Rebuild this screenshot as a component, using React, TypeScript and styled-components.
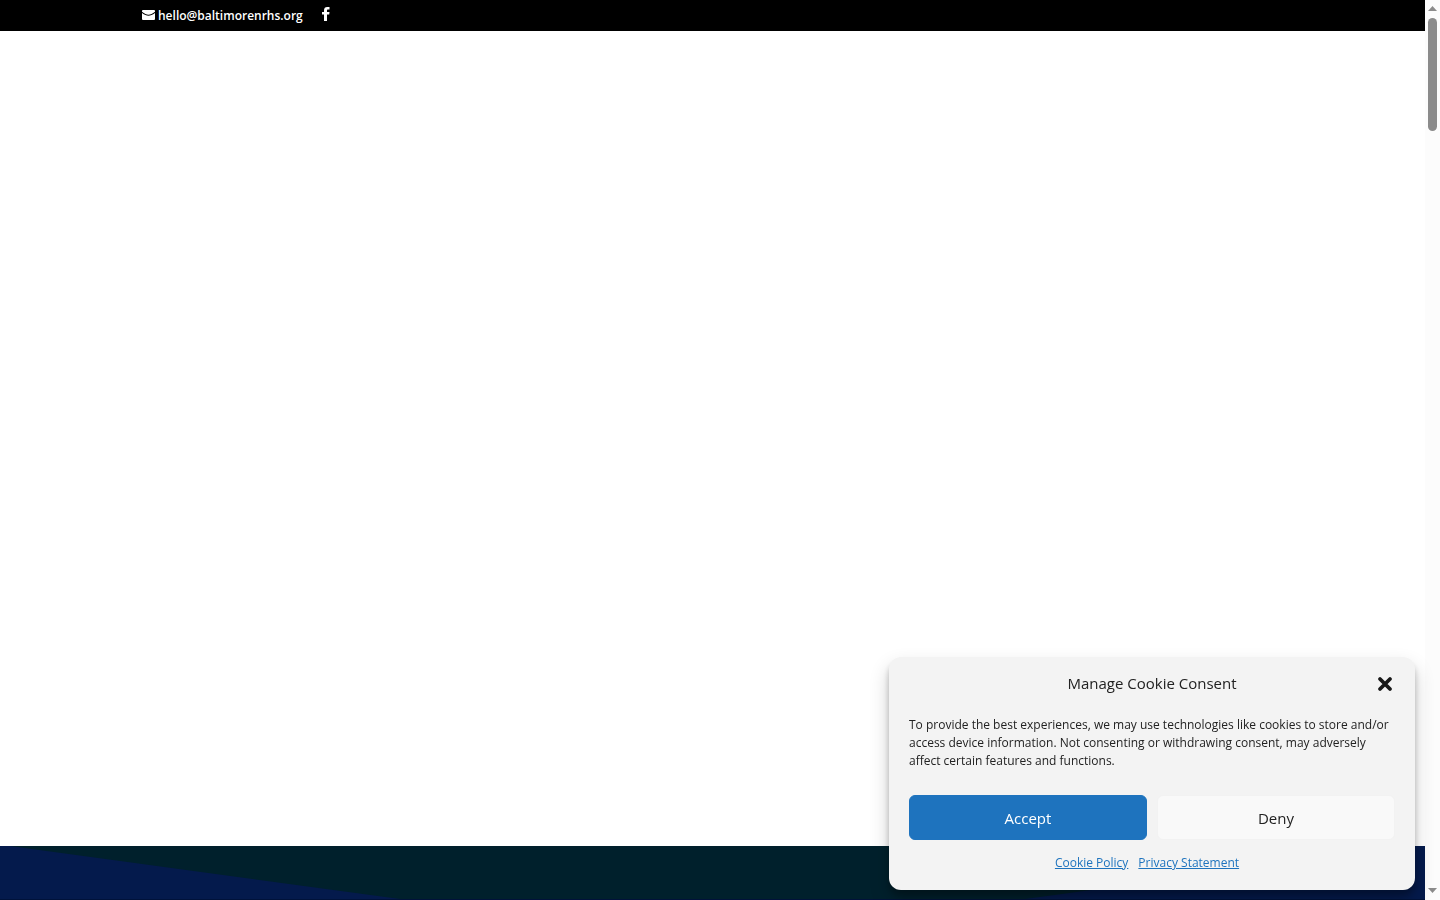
import React, { useState } from "react";
import styled, { createGlobalStyle } from "styled-components";

const GlobalStyle = createGlobalStyle`
  *, *::before, *::after { box-sizing: border-box; }
  body {
    margin: 0;
    background: #fff;
    color: #222;
    font-family: "Open Sans", Arial, sans-serif;
    font-size: 12px;
  }
`;

const Page = styled.div`
  display: grid;
  grid-template-columns: minmax(0, 1fr) 15px;
  height: 100vh;
  overflow: hidden;
`;

const Content = styled.div`
  display: flex;
  flex-direction: column;
  min-width: 0;
`;

const TopBar = styled.header`
  display: flex;
  align-items: flex-start;
  gap: 19px;
  padding: 7px 142px 6px;
  background: #000;
`;

const TopLink = styled.a`
  display: flex;
  align-items: flex-start;
  gap: 3px;
  color: #fff;
  font-weight: 600;
  line-height: 18px;
  text-decoration: none;

  svg { display: block; fill: currentColor; }
`;

const MailIcon = styled.svg`
  margin-top: 3px;
`;

const Hero = styled.main`
  flex: 1;
  background: #fff;
`;

const Band = styled.section`
  height: 54px;
  background: #00202c;
  border-bottom: 1px solid #00123a;

  svg { display: block; width: 100%; height: 100%; }
`;

const ScrollTrack = styled.div`
  display: flex;
  flex-direction: column;
  align-items: center;
  padding: 6px 0 7px;
  background: #fcfcfc;
`;

const ScrollArrow = styled.svg`
  display: block;
  width: 9px;
  height: 5px;
  fill: #8b8b8b;
`;

const ScrollThumb = styled.div`
  width: 9px;
  height: 113px;
  margin: 7px 0 auto;
  border-radius: 5px;
  background: #8b8b8b;
`;

const Dialog = styled.section`
  position: fixed;
  right: 25px;
  bottom: 10px;
  width: 526px;
  padding: 16px 20px;
  border-radius: 12px;
  background: #f3f3f3;
  box-shadow: rgba(0, 0, 0, 0.19) 0 10px 20px, rgba(0, 0, 0, 0.23) 0 6px 6px;
`;

const DialogHeader = styled.div`
  display: grid;
  grid-template-columns: 20px 1fr 20px;
  align-items: center;
`;

const Title = styled.h2`
  grid-column: 2;
  margin: 0;
  font-size: 15px;
  font-weight: 400;
  line-height: 20px;
  text-align: center;
`;

const CloseButton = styled.button`
  display: flex;
  justify-content: center;
  padding: 3px 0 1px;
  border: 0;
  background: none;
  color: #181818;
  cursor: pointer;
`;

const Message = styled.p`
  margin: 23px 0 25px;
  line-height: 18px;
`;

const Actions = styled.div`
  display: flex;
  gap: 10px;
`;

const ActionButton = styled.button<{ $primary?: boolean }>`
  flex: 1;
  height: 45px;
  padding: 0;
  border: 1px solid ${(p) => (p.$primary ? "#1e73be" : "#f2f2f2")};
  border-radius: 6px;
  background: ${(p) => (p.$primary ? "#1e73be" : "#f9f9f9")};
  color: ${(p) => (p.$primary ? "#fff" : "#222")};
  font: 400 15px/20px "Open Sans", Arial, sans-serif;
  cursor: pointer;
`;

const Links = styled.nav`
  display: flex;
  justify-content: center;
  gap: 10px;
  padding: 14px 10px 2px 0;
`;

const PolicyLink = styled.a`
  color: #1e73be;
  line-height: 18px;
  text-decoration: underline;
`;

export default function App() {
  const [open, setOpen] = useState(true);
  const close = () => setOpen(false);

  return (
    <>
      <GlobalStyle />
      <Page>
        <Content>
          <TopBar>
            <TopLink href="mailto:hello@baltimorenrhs.org">
              <MailIcon width="13" height="10" viewBox="0 0 13 10" aria-hidden="true">
                <path d="M1 0h11a1 1 0 0 1 1 1v.8C10.5 3.6 8.5 4.7 6.5 4.7S2.5 3.6 0 1.8V1a1 1 0 0 1 1-1zM0 3c2.5 1.8 4.5 2.8 6.500 2.800S10.500 4.800 13 3v6a1 1 0 0 1-1 1H1a1 1 0 0 1-1-1z" />
              </MailIcon>
              hello@baltimorenrhs.org
            </TopLink>
            <TopLink href="#facebook" aria-label="Facebook">
              <svg width="8" height="14" viewBox="0 0 8 14" aria-hidden="true">
                <path d="M2 14V7.5H0V5h2V3.400C2 1.200 3.200 0 5.200 0H7.500v2.600H6c-.8 0-1 .3-1 .9V5h2.500l-.3 2.500H5V14z" />
              </svg>
            </TopLink>
          </TopBar>
          <Hero />
          <Band>
            <svg viewBox="0 0 1425 53" preserveAspectRatio="none" aria-hidden="true">
              <path d="M0 0H10L400 53H0zM1425 0H1415L1025 53H1425z" fill="#041a4c" />
            </svg>
          </Band>
        </Content>
        <ScrollTrack aria-hidden="true">
          <ScrollArrow viewBox="0 0 9 5"><path d="M0 5L4.5 0 9 5z" /></ScrollArrow>
          <ScrollThumb />
          <ScrollArrow viewBox="0 0 9 5"><path d="M0 0L4.5 5 9 0z" /></ScrollArrow>
        </ScrollTrack>
      </Page>
      {open && (
        <Dialog role="dialog" aria-labelledby="consent-title">
          <DialogHeader>
            <Title id="consent-title">Manage Cookie Consent</Title>
            <CloseButton type="button" aria-label="Close" onClick={close}>
              <svg width="16" height="16" viewBox="0 0 16 16" aria-hidden="true">
                <path d="M3 3l10 10M13 3L3 13" fill="none" stroke="currentColor" strokeWidth="3.8" strokeLinecap="round" />
              </svg>
            </CloseButton>
          </DialogHeader>
          <Message>
            To provide the best experiences, we may use technologies like cookies to store and/or
            access device information. Not consenting or withdrawing consent, may adversely affect
            certain features and functions.
          </Message>
          <Actions>
            <ActionButton type="button" $primary onClick={close}>Accept</ActionButton>
            <ActionButton type="button" onClick={close}>Deny</ActionButton>
          </Actions>
          <Links aria-label="Legal">
            <PolicyLink href="#cookie-policy">Cookie Policy</PolicyLink>
            <PolicyLink href="#privacy-statement">Privacy Statement</PolicyLink>
          </Links>
        </Dialog>
      )}
    </>
  );
}
